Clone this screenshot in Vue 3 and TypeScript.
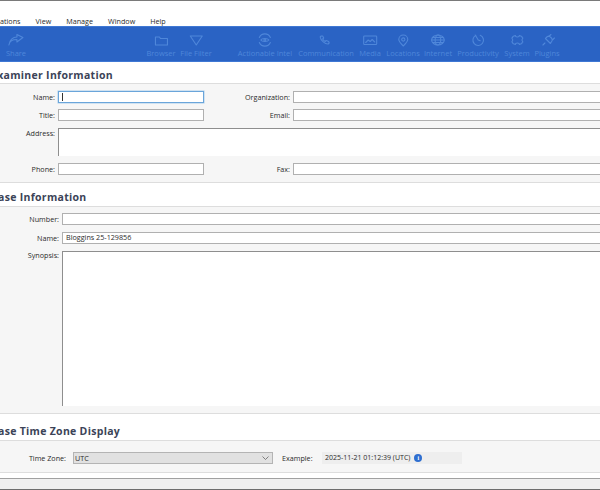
<script setup lang="ts">
type Tool = { label: string; x: number; icon: string }

// ribbon buttons, x is the centre of the button on the bar
const tools: Tool[] = [
  { label: 'Share', x: 16, icon: 'share' },
  { label: 'Browser', x: 161, icon: 'folder' },
  { label: 'File Filter', x: 196, icon: 'filter' },
  { label: 'Actionable Intel', x: 265, icon: 'intel' },
  { label: 'Communication', x: 326, icon: 'phone' },
  { label: 'Media', x: 370, icon: 'media' },
  { label: 'Locations', x: 403, icon: 'pin' },
  { label: 'Internet', x: 438, icon: 'globe' },
  { label: 'Productivity', x: 478, icon: 'clock' },
  { label: 'System', x: 517, icon: 'gear' },
  { label: 'Plugins', x: 547, icon: 'plug' },
]

const menus = ['ations', 'View', 'Manage', 'Window', 'Help']
</script>

<template>
  <div class="app">
    <div class="menubar">
      <span v-for="m in menus" :key="m">{{ m }}</span>
    </div>

    <div class="ribbon">
      <div v-for="t in tools" :key="t.label" class="tool" :style="{ left: t.x + 'px' }">
        <svg width="20" height="16" viewBox="0 0 20 16" fill="none" stroke="currentColor" stroke-width="1.1" stroke-linecap="round" stroke-linejoin="round">
          <path v-if="t.icon === 'share'" d="M3 13c.5-3.500 3.500-5.500 8-5.500V10l6-4.500L11 2.500V5C7 5 3.500 8 3 13z" />
          <path v-if="t.icon === 'folder'" d="M4 5h4l1 1.500h7V13H4z" />
          <path v-if="t.icon === 'filter'" d="M4 4h12l-6 9z" />
          <template v-if="t.icon === 'intel'">
            <path d="M4.500 5.500a6 6 0 0 1 11 0M15.500 10.500a6 6 0 0 1-11 0" />
            <path d="M6 8c1-2 7-2 8 0c-1 2-7 2-8 0z" />
            <circle cx="10" cy="8" r="1" />
          </template>
          <path v-if="t.icon === 'phone'" d="M5 4l1.500 0 1 2-1 1c.5 1 1.500 2 2.500 2.500l1-1 2.500 1 .5 1.500-1 1c-3 .2-7.500-3.500-8-7z" />
          <template v-if="t.icon === 'media'">
            <rect x="3.500" y="4" width="13" height="8.500" rx=".8" />
            <path d="M5.500 10.500l2.500-2.500 2 1.500 2-2 2.500 2.500" />
          </template>
          <template v-if="t.icon === 'pin'">
            <path d="M10 14c-2.500-2.500-4.500-4.500-4.500-6.500a4.500 4.500 0 0 1 9 0c0 2-2 4-4.500 6.500z" />
            <circle cx="10" cy="7.500" r="1.600" />
          </template>
          <template v-if="t.icon === 'globe'">
            <ellipse cx="10" cy="8" rx="6.300" ry="5" />
            <ellipse cx="10" cy="8" rx="2.800" ry="5" />
            <path d="M3.700 8h12.600M4.700 5.500h10.600M4.700 10.500h10.600" />
          </template>
          <template v-if="t.icon === 'clock'">
            <path d="M7.500 3.500A5.300 5.300 0 1 0 12 3.300" />
            <path d="M7 3l3 5 2 .8" />
          </template>
          <path v-if="t.icon === 'gear'" d="M8 3.500a2 1.500 0 0 0 4 0l2.500 1a1.500 1.500 0 0 0 1 1.500l-.5 1a1.500 1.500 0 0 0 0 2l.5 1a1.500 1.500 0 0 0-1 1.500l-2.500 1a2 1.500 0 0 0-4 0l-2.500-1a1.500 1.500 0 0 0-1-1.500l.5-1a1.500 1.500 0 0 0 0-2l-.5-1a1.500 1.500 0 0 0 1-1.500z" />
          <path v-if="t.icon === 'plug'" d="M5.500 13l2-2M8 6.500l5 5 1.500-2.500c.5-1 .5-2-.5-3l-1-1c-1-1-2-1-3-.5zM11.500 4.500L13.500 2.500M15 8l2-2" />
        </svg>
        <span>{{ t.label }}</span>
      </div>
    </div>

    <h2 class="heading first">Examiner Information</h2>
    <section class="panel examiner">
      <div class="grid">
        <label>Name:</label>
        <div class="input focused"><i class="caret"></i></div>
        <label>Organization:</label>
        <div class="input wide"></div>

        <label>Title:</label>
        <div class="input"></div>
        <label>Email:</label>
        <div class="input wide"></div>

        <label class="address">Address:</label>
        <div class="input area"></div>

        <label>Phone:</label>
        <div class="input"></div>
        <label>Fax:</label>
        <div class="input wide"></div>
      </div>
    </section>

    <h2 class="heading">Case Information</h2>
    <section class="panel case">
      <div class="case-grid">
        <label>Number:</label>
        <div class="input wide"></div>
        <label>Name:</label>
        <div class="input wide">Bloggins 25-129856</div>
        <label class="synopsis-label">Synopsis:</label>
        <div class="input wide synopsis"></div>
      </div>
    </section>

    <h2 class="heading zone-heading">Case Time Zone Display</h2>
    <section class="panel zone">
      <label class="zone-label">Time Zone:</label>
      <div class="select">
        <span>UTC</span>
        <svg width="7" height="4" viewBox="0 0 7 4" fill="none" stroke="#666" stroke-width=".8"><path d="M.5 .5l3 3 3-3" /></svg>
      </div>
      <label class="example-label">Example:</label>
      <div class="example">
        <span>2025-11-21 01:12:39 (UTC)</span>
        <b class="info">i</b>
      </div>
    </section>

    <div class="statusbar"></div>
  </div>
</template>

<style>
html,
body {
  margin: 0;
  overflow: hidden;
  background: #fff;
}
</style>

<style scoped>
.app {
  width: 600px;
  height: 490px;
  overflow: hidden;
  display: flex;
  flex-direction: column;
  background: #fff;
  border-top: 1px solid #7a7a7a;
  box-sizing: border-box;
  font-family: 'Open Sans', 'Noto Sans', sans-serif;
  font-size: 7.2px;
  color: #2b2b2b;
}

.menubar {
  height: 25px;
  padding: 15px 0 0 0;
  box-sizing: border-box;
  display: flex;
  gap: 15px;
  line-height: 10px;
}

.ribbon {
  position: relative;
  height: 36px;
  flex: none;
  background: #2a63c4;
  border-top: 1px solid #3f78d4;
  border-bottom: 1px solid #3f78d4;
  box-sizing: border-box;
  color: #4f87da;
}

.tool {
  position: absolute;
  top: 5px;
  transform: translateX(-50%);
  display: flex;
  flex-direction: column;
  align-items: center;
  white-space: nowrap;
  font-size: 7.5px;
  line-height: 10px;
}

.heading {
  margin: 0 0 0 -9px;
  height: 23px;
  padding-top: 7px;
  box-sizing: border-box;
  font-size: 10.5px;
  line-height: 14px;
  font-weight: 700;
  letter-spacing: 0.3px;
  color: #3b4357;
  white-space: nowrap;
}

.heading.first {
  height: 21px;
  padding-top: 6px;
}

.heading.zone-heading {
  height: 26px;
  padding-top: 10px;
}

.panel {
  background: #f6f6f6;
  border-top: 1px solid #ddd;
  border-bottom: 1px solid #ddd;
  box-sizing: border-box;
}

.examiner {
  height: 100px;
  padding-top: 7px;
}

.grid {
  display: grid;
  grid-template-columns: 55px 146px 83px 1fr;
  column-gap: 3px;
  grid-template-rows: 12px 12px 30px 12px;
  row-gap: 6px;
}

label {
  text-align: right;
  line-height: 12px;
  white-space: nowrap;
}

.address {
  line-height: 12px;
}

.synopsis-label {
  line-height: 8px;
}

.input {
  height: 12px;
  box-sizing: border-box;
  background: #fff;
  border: 1px solid #b0b0b0;
  padding-left: 3px;
  line-height: 9px;
  position: relative;
}

.input.wide {
  margin-right: -6px;
}

.input.focused {
  border-color: #6aa5da;
  box-shadow: 0 0 0 0.5px #a9cdec;
}

.caret {
  position: absolute;
  left: 3px;
  top: 1px;
  width: 1px;
  height: 8px;
  background: #333;
}

.input.area {
  grid-column: 2 / 5;
  height: 28px;
  margin: 1px -6px 0 0;
  border-color: #8e8e8e;
  border-width: 1px 0 0 1px;
}

.case {
  height: 208px;
  padding-top: 6px;
}

.case-grid {
  display: grid;
  grid-template-columns: 59px 1fr;
  column-gap: 3px;
  grid-template-rows: 12px 12px 155px;
  row-gap: 7px;
}

.input.synopsis {
  height: 155px;
  border-color: #8e8e8e;
  border-width: 1px 0 0 1px;
}

.zone {
  height: 33px;
  padding-top: 11px;
  display: flex;
  align-items: flex-start;
}

.zone-label {
  width: 66px;
  flex: none;
}

.select {
  width: 200px;
  height: 12px;
  margin-left: 7px;
  flex: none;
  box-sizing: border-box;
  background: #e1e1e1;
  border: 1px solid #b4b4b4;
  padding: 0 3px 0 1px;
  display: flex;
  align-items: center;
  justify-content: space-between;
  line-height: 10px;
}

.example-label {
  margin-left: 9px;
  width: 33px;
  text-align: left;
  flex: none;
}

.example {
  width: 140px;
  height: 12px;
  margin-left: 7px;
  padding-left: 3px;
  flex: none;
  box-sizing: border-box;
  background: #eeeeee;
  display: flex;
  align-items: center;
  gap: 4px;
  font-size: 7px;
  line-height: 12px;
}

.info {
  width: 8px;
  height: 8px;
  border-radius: 50%;
  background: #2f6fd0;
  color: #fff;
  font-size: 6px;
  line-height: 8px;
  text-align: center;
  font-family: 'Liberation Serif', serif;
}

.statusbar {
  margin-top: 5px;
  height: 12px;
  flex: none;
  background: #f0f0f0;
  border-top: 1px solid #a0a0a0;
  border-bottom: 1px solid #6e6e6e;
  box-sizing: border-box;
}
</style>
